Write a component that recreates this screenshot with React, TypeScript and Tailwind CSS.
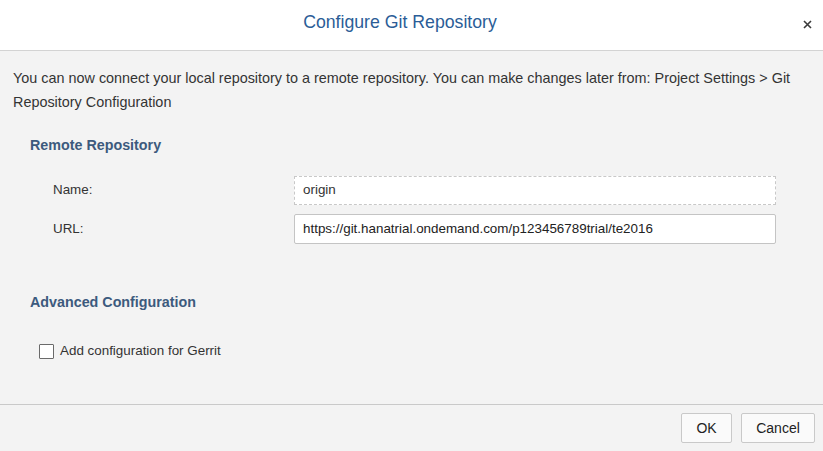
export default function App() {
  return (
    <div className="flex h-[451px] w-[823px] flex-col font-['Liberation_Sans',Arial,sans-serif] text-[13.4px] text-[#333]">
      <header className="relative flex h-[51px] shrink-0 items-center justify-center border-b border-[#d3d3d3] bg-white">
        <h1 className="pb-[6px] pr-[23px] text-[17.7px] text-[#2b5d97]">Configure Git Repository</h1>
        <button className="absolute right-[11px] top-[19px] flex h-[10px] w-[10px] items-center justify-center">
          <svg width="9" height="9" viewBox="0 0 9 9">
            <path d="M1 1 L8 8 M8 1 L1 8" stroke="#3b3b3b" strokeWidth="1.6" />
          </svg>
        </button>
      </header>

      <main className="flex-1 bg-[#f3f3f3] px-[13px] pt-[15px]">
        <p className="text-[14.4px] leading-6">
          You can now connect your local repository to a remote repository. You can make changes later from: Project
          Settings &gt; Git Repository Configuration
        </p>

        <h2 className="ml-[17px] mt-[21px] text-[14.3px] font-bold leading-5 text-[#3c5a7d]">Remote Repository</h2>

        <div className="ml-[40px] mr-[34px] mt-[21px] grid grid-cols-[241px_1fr] items-center gap-y-[9px]">
          <label>Name:</label>
          <div className="flex h-[29px] items-center border border-dashed border-[#c8c8c8] bg-white px-[8px]">
            origin
          </div>
          <label>URL:</label>
          <div className="flex h-[30px] items-center rounded-[2px] border border-[#c4c4c4] bg-white px-[8px] text-[#222]">
            https://git.hanatrial.ondemand.com/p123456789trial/te2016
          </div>
        </div>

        <h2 className="ml-[17px] mt-[48px] text-[14.3px] font-bold leading-5 text-[#3c5a7d]">Advanced Configuration</h2>

        <label className="ml-[26px] mt-[29px] flex items-center gap-[6px]">
          <span className="h-[15px] w-[15px] rounded-[1px] border border-[#6a6a6a] bg-white" />
          <span>Add configuration for Gerrit</span>
        </label>
      </main>

      <footer className="flex h-[47px] shrink-0 items-center justify-end gap-[9px] border-t border-[#c9c9c9] bg-[#f3f3f3] pr-[8px]">
        <button className="h-[30px] w-[51px] rounded-[2px] border border-[#c9c9c9] bg-[#fafafa] text-[14px] text-[#222]">
          OK
        </button>
        <button className="h-[30px] w-[74px] rounded-[2px] border border-[#c9c9c9] bg-[#fafafa] text-[14px] text-[#222]">
          Cancel
        </button>
      </footer>
    </div>
  );
}
